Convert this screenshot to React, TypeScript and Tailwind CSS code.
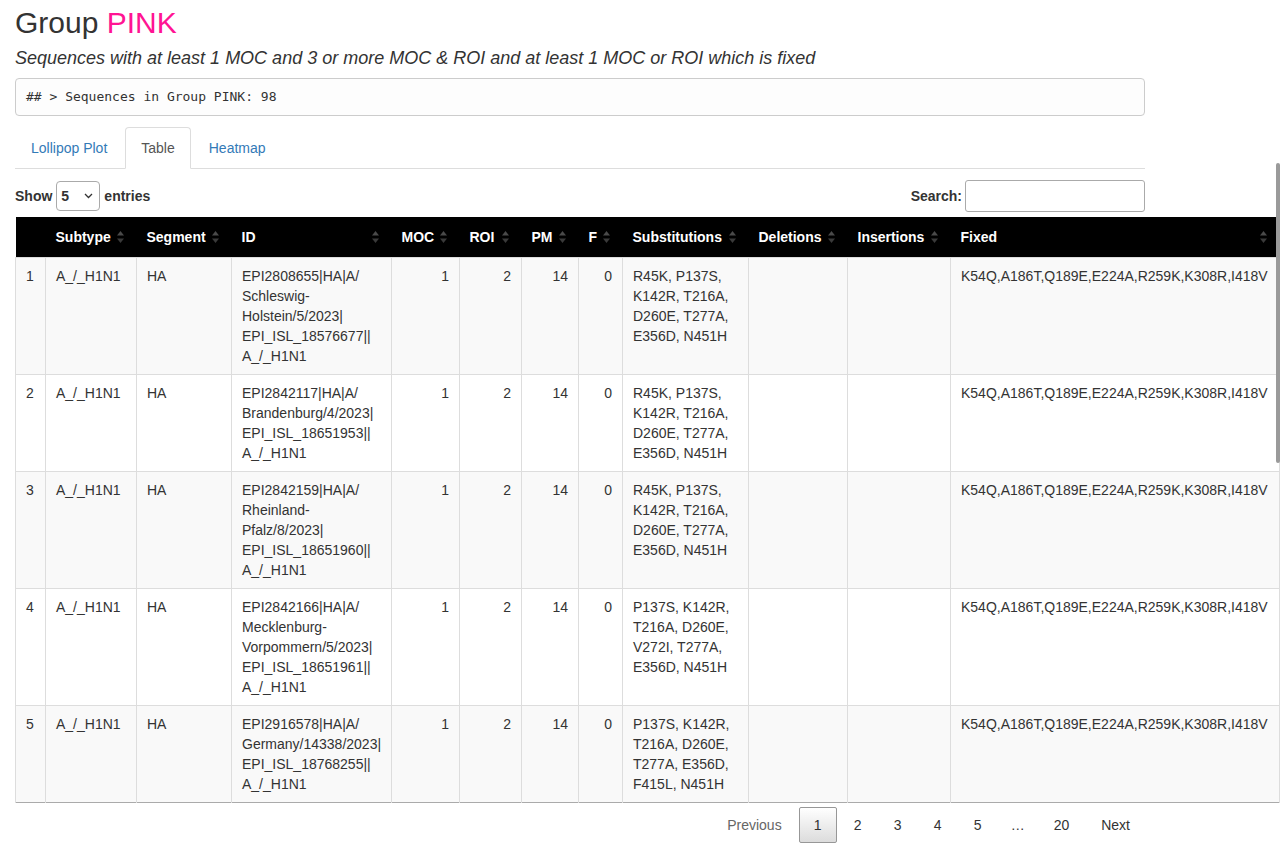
import React from "react";

type Row = {
  n: number;
  id: string[];
  subs: string[];
};

const subsA = ["R45K, P137S,", "K142R, T216A,", "D260E, T277A,", "E356D, N451H"];

const rows: Row[] = [
  {
    n: 1,
    id: ["EPI2808655|HA|A/", "Schleswig-", "Holstein/5/2023|", "EPI_ISL_18576677||", "A_/_H1N1"],
    subs: subsA,
  },
  {
    n: 2,
    id: ["EPI2842117|HA|A/", "Brandenburg/4/2023|", "EPI_ISL_18651953||", "A_/_H1N1"],
    subs: subsA,
  },
  {
    n: 3,
    id: ["EPI2842159|HA|A/", "Rheinland-", "Pfalz/8/2023|", "EPI_ISL_18651960||", "A_/_H1N1"],
    subs: subsA,
  },
  {
    n: 4,
    id: ["EPI2842166|HA|A/", "Mecklenburg-", "Vorpommern/5/2023|", "EPI_ISL_18651961||", "A_/_H1N1"],
    subs: ["P137S, K142R,", "T216A, D260E,", "V272I, T277A,", "E356D, N451H"],
  },
  {
    n: 5,
    id: ["EPI2916578|HA|A/", "Germany/14338/2023|", "EPI_ISL_18768255||", "A_/_H1N1"],
    subs: ["P137S, K142R,", "T216A, D260E,", "T277A, E356D,", "F415L, N451H"],
  },
];

const columns = [
  { label: "", w: "w-[30px]", sort: false },
  { label: "Subtype", w: "w-[91px]", sort: true },
  { label: "Segment", w: "w-[95px]", sort: true },
  { label: "ID", w: "w-[160px]", sort: true },
  { label: "MOC", w: "w-[68px]", sort: true },
  { label: "ROI", w: "w-[62px]", sort: true },
  { label: "PM", w: "w-[57px]", sort: true },
  { label: "F", w: "w-[44px]", sort: true },
  { label: "Substitutions", w: "w-[126px]", sort: true },
  { label: "Deletions", w: "w-[99px]", sort: true },
  { label: "Insertions", w: "w-[103px]", sort: true },
  { label: "Fixed", w: "w-[329px]", sort: true },
];

function SortIcon() {
  return (
    <svg
      width="7"
      height="13"
      viewBox="0 0 7 13"
      className="absolute right-[13px] top-1/2 -translate-y-1/2"
    >
      <polygon points="0,5 3.5,0.5 7,5" fill="#4a4a4a" />
      <polygon points="0,8 7,8 3.5,12.5" fill="#3a3a3a" />
    </svg>
  );
}

function Lines({ lines }: { lines: string[] }) {
  return (
    <>
      {lines.map((l, i) => (
        <React.Fragment key={i}>
          {l}
          {i < lines.length - 1 && <br />}
        </React.Fragment>
      ))}
    </>
  );
}

const td = "border-l border-t border-[#ddd] px-[10px] py-2 align-top";

export default function App() {
  return (
    <div className="relative min-h-[851px] bg-white text-[#333] text-sm font-['Liberation_Sans',Arial,sans-serif]">
      {/* page scrollbar thumb */}
      <div className="absolute right-0 top-[163px] w-[4px] h-[300px] bg-[#9a9a9a] rounded-[2px]" />

      <div className="w-[1160px] px-[15px] pt-[6px]">
        <h2 className="text-[30px] leading-[33px] font-normal">
          Group <span className="text-[#ff1493]">PINK</span>
        </h2>
        <h4 className="mt-[9px] text-[18px] leading-[20px] italic">
          Sequences with at least 1 MOC and 3 or more MOC &amp; ROI and at least 1 MOC or ROI which is fixed
        </h4>

        <div className="mt-[10px] h-[38px] flex items-center px-[10px] border border-[#ccc] rounded-[4px] bg-[#fdfdfd] font-['DejaVu_Sans_Mono',monospace] text-[13px]">
          ## &gt; Sequences in Group PINK: 98
        </div>

        {/* tabs */}
        <ul className="mt-[11px] flex border-b border-[#ddd]">
          <li className="-mb-px mr-[2px]">
            <a className="block px-[15px] py-[10px] leading-[20px] border border-transparent text-[#337ab7]">
              Lollipop Plot
            </a>
          </li>
          <li className="-mb-px mr-[2px]">
            <a className="block px-[15px] py-[10px] leading-[20px] border border-[#ddd] border-b-white rounded-t-[4px] bg-white text-[#555]">
              Table
            </a>
          </li>
          <li className="-mb-px mr-[2px]">
            <a className="block px-[15px] py-[10px] leading-[20px] border border-transparent text-[#337ab7]">
              Heatmap
            </a>
          </li>
        </ul>

        {/* controls */}
        <div className="mt-[11px] h-[32px] flex items-center justify-between">
          <div className="flex items-center font-bold">
            <span>Show</span>
            <div className="mx-[4px] w-[44px] h-[30px] border border-[#aaa] rounded-[4px] flex items-center justify-between pl-[4px] pr-[6px] font-bold">
              <span>5</span>
              <svg width="9" height="6" viewBox="0 0 9 6">
                <polyline points="1,1 4.5,4.5 8,1" fill="none" stroke="#333" strokeWidth="1.3" />
              </svg>
            </div>
            <span>entries</span>
          </div>
          <div className="flex items-center font-bold">
            <span className="mr-[3px]">Search:</span>
            <div className="w-[180px] h-[32px] border border-[#aaa] rounded-[3px]" />
          </div>
        </div>

        {/* table */}
        <table className="mt-[5px] w-[1264px] table-fixed border-collapse border-b border-b-[#aaa]">
          <thead>
            <tr className="bg-black text-white">
              {columns.map((c, i) => (
                <th
                  key={i}
                  className={`${c.w} relative h-[40px] px-[10px] py-[10px] text-left font-bold leading-[20px]`}
                >
                  {c.label}
                  {c.sort && <SortIcon />}
                </th>
              ))}
            </tr>
          </thead>
          <tbody>
            {rows.map((r) => (
              <tr key={r.n} className={r.n % 2 === 1 ? "bg-[#f9f9f9]" : "bg-white"}>
                <td className={td}>{r.n}</td>
                <td className={td}>A_/_H1N1</td>
                <td className={td}>HA</td>
                <td className={td}>
                  <Lines lines={r.id} />
                </td>
                <td className={`${td} text-right`}>1</td>
                <td className={`${td} text-right`}>2</td>
                <td className={`${td} text-right`}>14</td>
                <td className={`${td} text-right`}>0</td>
                <td className={td}>
                  <Lines lines={r.subs} />
                </td>
                <td className={td}></td>
                <td className={td}></td>
                <td className={`${td} border-r whitespace-nowrap`}>
                  K54Q,A186T,Q189E,E224A,R259K,K308R,I418V
                </td>
              </tr>
            ))}
          </tbody>
        </table>

        {/* pagination */}
        <div className="mt-[4px] flex justify-end items-center">
          <span className="h-[36px] px-[14px] flex items-center border border-transparent text-[#666]">
            Previous
          </span>
          {["1", "2", "3", "4", "5"].map((p) => (
            <span
              key={p}
              className={`ml-[2px] h-[36px] w-[38px] justify-center flex items-center border rounded-[2px] ${
                p === "1"
                  ? "border-[#979797] bg-gradient-to-b from-white to-[#dcdcdc]"
                  : "border-transparent"
              }`}
            >
              {p}
            </span>
          ))}
          <span className="ml-[2px] h-[36px] px-[12px] flex items-center text-[#333]">…</span>
          <span className="ml-[2px] h-[36px] px-[14px] flex items-center border border-transparent">
            20
          </span>
          <span className="ml-[2px] h-[36px] px-[14px] flex items-center border border-transparent">
            Next
          </span>
        </div>
      </div>
    </div>
  );
}
